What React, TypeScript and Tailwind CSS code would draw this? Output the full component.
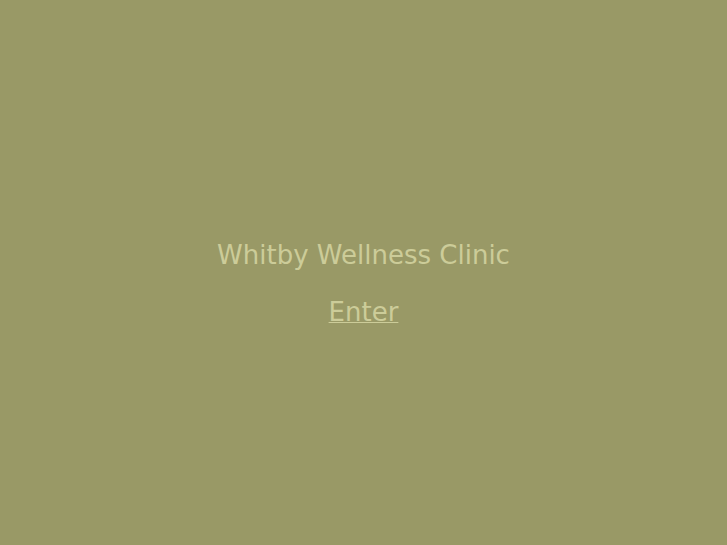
export default function App() {
  return (
    <main className="flex min-h-screen flex-col items-center justify-center gap-7 bg-[#999966] pt-[22px] font-['DejaVu_Sans',sans-serif] text-[26px] leading-[29px] text-[#cccc99]">
      <h1>Whitby Wellness Clinic</h1>
      <a href="#enter" className="underline decoration-1 underline-offset-1">
        Enter
      </a>
    </main>
  );
}
